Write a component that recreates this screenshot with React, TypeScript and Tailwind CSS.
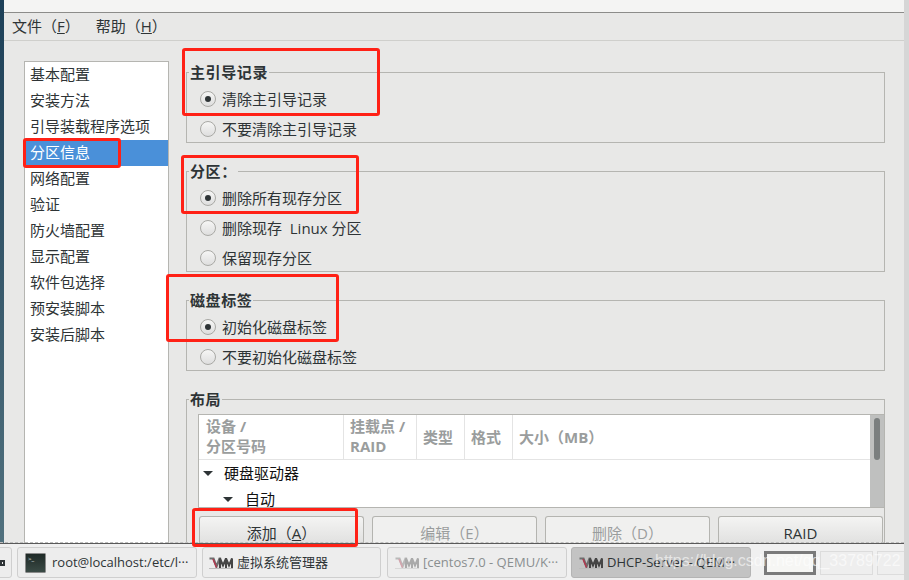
const ff = "font-['Open_Sans','Noto_Sans_CJK_SC',sans-serif]";

function Radio({ on, label }: { on?: boolean; label: React.ReactNode }) {
  return (
    <div className="flex h-[30px] items-center gap-[6px] pl-[13px]">
      <span className="flex h-[16px] w-[16px] items-center justify-center rounded-full border border-[#a9a9a5] bg-gradient-to-b from-[#f6f6f5] to-[#dedede]">
        {on && <span className="h-[6px] w-[6px] rounded-full bg-[#2e3436]" />}
      </span>
      <span className="text-[15px] leading-[20px] text-[#2e3436]">{label}</span>
    </div>
  );
}

function Group({ title, children, className }: { title: string; children: React.ReactNode; className: string }) {
  return (
    <fieldset className={"border border-[#b5b5b1] " + className}>
      <legend className="ml-[2px] px-[1px] text-[15px] font-bold leading-[18px] tracking-[0.6px] text-[#2e3436]">{title}</legend>
      {children}
    </fieldset>
  );
}

function Mark({ className }: { className: string }) {
  return <div className={"pointer-events-none absolute rounded-[3px] border-[3px] border-[#ff2116] " + className} />;
}

function VmIcon({ faded }: { faded?: boolean }) {
  return (
    <svg width="24" height="12" viewBox="0 0 24 12" className={faded ? "opacity-40" : ""}>
      <path d="M0.5 1.5h4l3 8 3-8h0.5v9.5" fill="none" stroke="#6e6e6e" strokeWidth="2.2" />
      <path d="M4 2l3.5 8.5" fill="none" stroke="#b03a50" strokeWidth="1.6" />
      <path d="M11 11V1.5l3 7 3-7v9.5M17 11V1.5l3 7 3-7v9.5" fill="none" stroke="#454545" strokeWidth="2" />
      <path d="M0 11.5h24" stroke="#bbb" strokeWidth="1" />
    </svg>
  );
}

function Task({ w, children, active, faded }: { w: string; children: React.ReactNode; active?: boolean; faded?: boolean }) {
  return (
    <div
      className={
        "flex h-[31px] shrink-0 items-center overflow-hidden whitespace-nowrap rounded-[3px] border text-[13px] " +
        w + " " +
        (active
          ? "border-[#b4b4b4] bg-[#c3c3c3] text-[#2e3436]"
          : faded
          ? "border-[#cfcfcf] bg-[#ededed] text-[#8a8f90]"
          : "border-[#cfcfcf] bg-[#ededed] text-[#2e3436]")
      }
    >
      {children}
    </div>
  );
}

const items = ["基本配置", "安装方法", "引导装载程序选项", "分区信息", "网络配置", "验证", "防火墙配置", "显示配置", "软件包选择", "预安装脚本", "安装后脚本"];

function Btn({ children, disabled }: { children: React.ReactNode; disabled?: boolean }) {
  return (
    <div
      className={
        "flex h-[34px] w-[165px] items-center justify-center rounded-t-[3px] border border-b-0 border-[#b4b4b0] text-[15px] " +
        (disabled ? "bg-[#f0f0ef] text-[#9a9d9d]" : "bg-gradient-to-b from-[#f4f4f3] to-[#dcdcdb] text-[#2e3436]")
      }
    >
      {children}
    </div>
  );
}

export default function App() {
  return (
    <div className={"relative flex h-[580px] w-[909px] overflow-hidden bg-[#eaeaea] " + ff}>
      <div className="flex w-[904px] shrink-0 flex-col">
        <div className="flex h-[543px] shrink-0">
          <div className="w-[4px] shrink-0 bg-gradient-to-b from-[#1d4058] to-[#51717e]" />
          <div className="flex min-w-0 flex-1 flex-col">
            <div className="h-[13px] shrink-0 border-b border-[#8c8c8a] bg-[#f4f4f3]" />
            <div className="flex h-[28px] shrink-0 items-center gap-[16px] border-b border-[#cfcfcc] bg-[#e8e8e7] pb-[1px] pl-[8px] text-[15px] text-[#2e3436]">
              <span>文件（<span className="underline">F</span>）</span>
              <span>帮助（<span className="underline">H</span>）</span>
            </div>
            <div className="flex min-h-0 flex-1 overflow-hidden bg-[#e8e8e7] pl-[20px] pt-[20px]">
              <div className="w-[145px] shrink-0 border border-b-0 border-[#b5b5b1] bg-white">
                {items.map((t, i) => (
                  <div
                    key={t}
                    className={"flex h-[26px] items-center pl-[5px] pb-[1px] text-[15px] " + (i === 3 ? "bg-[#4a90d9] text-white" : "text-[#2e3436]")}
                  >
                    {t}
                  </div>
                ))}
              </div>
              <div className="ml-[17px] mt-[2px] w-[699px] shrink-0">
                <Group title="主引导记录" className="h-[80px]">
                  <div className="pt-[3px]">
                    <Radio on label="清除主引导记录" />
                    <Radio label="不要清除主引导记录" />
                  </div>
                </Group>
                <Group title="分区：" className="mt-[19px] h-[110px]">
                  <div className="pt-[3px]">
                    <Radio on label="删除所有现存分区" />
                    <Radio label={<span>删除现存&nbsp;&nbsp;Linux 分区</span>} />
                    <Radio label="保留现存分区" />
                  </div>
                </Group>
                <Group title="磁盘标签" className="mt-[19px] h-[80px]">
                  <div className="pt-[3px]">
                    <Radio on label="初始化磁盘标签" />
                    <Radio label="不要初始化磁盘标签" />
                  </div>
                </Group>
                <Group title="布局" className="mt-[19px] h-[170px] border-b-0">
                  <div className="ml-[11px] mt-[6px] flex h-[94px] w-[686px] border border-r-0 border-[#b5b5b1] bg-white">
                    <div className="min-w-0 flex-1">
                      <div className="flex h-[45px] border-b border-[#e4e4e4] text-[15px] font-bold leading-[20px] text-[#9a9d9d]">
                        <div className="w-[145px] border-r border-[#e4e4e4] pl-[7px] pt-[1px]">设备 /<br />分区号码</div>
                        <div className="w-[73px] border-r border-[#e4e4e4] pl-[6px] pt-[1px]">挂载点 /<br />RAID</div>
                        <div className="flex w-[48px] items-center border-r border-[#e4e4e4] pl-[6px]">类型</div>
                        <div className="flex w-[48px] items-center border-r border-[#e4e4e4] pl-[6px]">格式</div>
                        <div className="flex items-center pl-[6px]">大小（MB）</div>
                      </div>
                      <div className="flex h-[26px] items-center pl-[4px] text-[15px] text-[#111111]">
                        <span className="mr-[11px] h-0 w-0 border-x-[5px] border-t-[5px] border-x-transparent border-t-[#2e3436]" />
                        <span>硬盘驱动器</span>
                      </div>
                      <div className="flex h-[26px] items-center pl-[24px] text-[15px] text-[#111111]">
                        <span className="mr-[12px] h-0 w-0 border-x-[5px] border-t-[5px] border-x-transparent border-t-[#2e3436]" />
                        <span>自动</span>
                      </div>
                    </div>
                    <div className="w-[14px] shrink-0 bg-[#bfc0bf] px-[4px] pt-[3px]">
                      <div className="h-[42px] w-[6px] rounded-full bg-[#7b7f7f]" />
                    </div>
                  </div>
                  <div className="ml-[12px] mt-[8px] flex gap-[8px]">
                    <Btn>添加（<span className="underline">A</span>）</Btn>
                    <Btn disabled>编辑（E）</Btn>
                    <Btn disabled>删除（D）</Btn>
                    <Btn>RAID</Btn>
                  </div>
                </Group>
              </div>
            </div>
          </div>
        </div>
        <div className="flex min-h-0 flex-1 items-start border-t border-[#5a5a5a] bg-[#f0f0f0] pt-[3px]">
          <div className="-ml-[9px] flex h-[31px] w-[21px] shrink-0 items-center justify-end rounded-[3px] border border-[#cfcfcf] bg-[#ededed] pr-[6px]">
            <span className="h-[6px] w-[5px] border-2 border-[#2e3436]" />
          </div>
          <div className="ml-[5px] flex items-start">
            <Task w="w-[180px] pl-[7px] gap-[6px]">
              <span className="flex h-[20px] w-[21px] shrink-0 items-start rounded-[1px] border border-[#8a8a8a] bg-gradient-to-b from-[#1f2a27] to-[#3a4a45] text-[6px] leading-[8px] text-white">
                <span className="ml-[2px] mt-[1px]">&gt;_</span>
              </span>
              <span>root@localhost:/etc/l···</span>
            </Task>
            <div className="ml-[5px]">
              <Task w="w-[179px] pl-[6px] gap-[4px]"><VmIcon />虚拟系统管理器</Task>
            </div>
            <div className="ml-[6px]">
              <Task w="w-[180px] pl-[7px] gap-[4px]" faded><VmIcon faded />[centos7.0 - QEMU/K···</Task>
            </div>
            <div className="ml-[4px]">
              <Task w="w-[180px] pl-[7px] gap-[4px]" active><VmIcon />DHCP-Server - QEM···</Task>
            </div>
          </div>
          <div className="ml-[13px] mt-[4px] flex shrink-0 gap-[4px]">
            <div className="h-[24px] w-[52px] border-[3px] border-[#7a7a7a] bg-[#f6f6f4]" />
            <div className="h-[24px] w-[53px] border border-[#dcdcdc] bg-[#eeeeee]" />
            <div className="h-[24px] w-[27px] border border-r-0 border-[#dcdcdc] bg-[#eeeeee]" />
          </div>
        </div>
      </div>
      <div className="w-[5px] shrink-0 bg-[#d6d6d6]" />

      <div className="absolute left-0 top-[542px] w-[904px] border-t border-dashed border-[#bdbdbd]" />
      <div className="absolute left-[655px] top-[551px] whitespace-nowrap font-['Liberation_Sans',sans-serif] text-[16px] leading-[20px] text-white/60">https://blog.csdn.net/qq_33789722</div>

      <Mark className="left-[182px] top-[48px] h-[68px] w-[198px]" />
      <Mark className="left-[23px] top-[138px] h-[30px] w-[98px]" />
      <Mark className="left-[181px] top-[155px] h-[59px] w-[178px]" />
      <Mark className="left-[166px] top-[274px] h-[68px] w-[173px]" />
      <Mark className="left-[192px] top-[508px] h-[39px] w-[166px]" />
    </div>
  );
}
